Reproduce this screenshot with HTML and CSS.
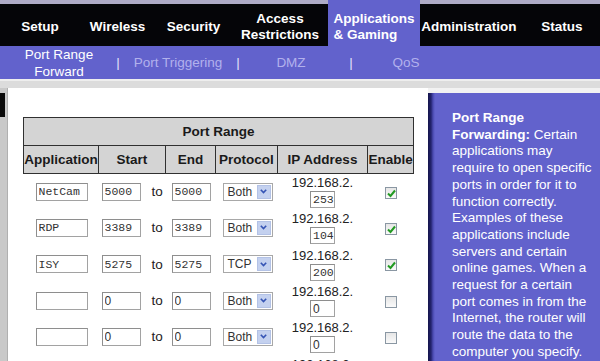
FILE: index.html
```html
<!DOCTYPE html>
<html>
<head>
<meta charset="utf-8">
<title>Port Range Forward</title>
<link rel="stylesheet" href="styles.css">
</head>
<body>
<div class="page">
  <nav class="topnav">
    <div class="tab t-setup">Setup</div>
    <div class="tab t-wireless">Wireless</div>
    <div class="tab t-security">Security</div>
    <div class="tab t-access"><span>Access<br>Restrictions</span></div>
    <div class="tab t-apps active"><span class="left">Applications<br>&amp; Gaming</span></div>
    <div class="tab t-admin">Administration</div>
    <div class="tab t-status">Status</div>
  </nav>
  <nav class="subnav">
    <div class="sub s-prf current">Port Range<br>Forward</div>
    <div class="sep">|</div>
    <div class="sub s-trig">Port Triggering</div>
    <div class="sep">|</div>
    <div class="sub s-dmz">DMZ</div>
    <div class="sep">|</div>
    <div class="sub s-qos">QoS</div>
  </nav>
  <div class="band"></div>
  <div class="main">
    <div class="edge"><div class="edge-mark"></div></div>
    <div class="content">
      <table class="ports">
        <colgroup>
          <col class="w-app"><col class="w-start"><col class="w-end"><col class="w-proto"><col class="w-ip"><col class="w-en">
        </colgroup>
        <thead>
          <tr class="h1"><th colspan="6">Port Range</th></tr>
          <tr class="h2"><th>Application</th><th>Start</th><th>End</th><th>Protocol</th><th>IP Address</th><th>Enable</th></tr>
        </thead>
        <tbody>
          <tr>
            <td class="c-app"><input class="inp mono app" value="NetCam"></td>
            <td class="c-start"><div class="pair"><input class="inp mono port" value="5000"><span class="to">to</span></div></td>
            <td class="c-end"><input class="inp mono port" value="5000"></td>
            <td class="c-proto"><div class="sel"><span class="sel-val">Both</span><span class="sel-btn"><svg width="7" height="5" viewBox="0 0 7 5"><path d="M0.8 0.8 L3.5 3.6 L6.2 0.8" fill="none" stroke="#3554b4" stroke-width="1.6"/></svg></span></div></td>
            <td class="c-ip"><div class="ip-pre">192.168.2.</div><input class="inp mono ip" value="253"></td>
            <td class="c-en"><span class="cb on"><svg width="11" height="11" viewBox="0 0 11 11"><path d="M2 5.5 L4.5 8 L9 2.5" fill="none" stroke="#229a22" stroke-width="2"/></svg></span></td>
          </tr>
          <tr>
            <td class="c-app"><input class="inp mono app" value="RDP"></td>
            <td class="c-start"><div class="pair"><input class="inp mono port" value="3389"><span class="to">to</span></div></td>
            <td class="c-end"><input class="inp mono port" value="3389"></td>
            <td class="c-proto"><div class="sel"><span class="sel-val">Both</span><span class="sel-btn"><svg width="7" height="5" viewBox="0 0 7 5"><path d="M0.8 0.8 L3.5 3.6 L6.2 0.8" fill="none" stroke="#3554b4" stroke-width="1.6"/></svg></span></div></td>
            <td class="c-ip"><div class="ip-pre">192.168.2.</div><input class="inp mono ip" value="104"></td>
            <td class="c-en"><span class="cb on"><svg width="11" height="11" viewBox="0 0 11 11"><path d="M2 5.5 L4.5 8 L9 2.5" fill="none" stroke="#229a22" stroke-width="2"/></svg></span></td>
          </tr>
          <tr>
            <td class="c-app"><input class="inp mono app" value="ISY"></td>
            <td class="c-start"><div class="pair"><input class="inp mono port" value="5275"><span class="to">to</span></div></td>
            <td class="c-end"><input class="inp mono port" value="5275"></td>
            <td class="c-proto"><div class="sel"><span class="sel-val">TCP</span><span class="sel-btn"><svg width="7" height="5" viewBox="0 0 7 5"><path d="M0.8 0.8 L3.5 3.6 L6.2 0.8" fill="none" stroke="#3554b4" stroke-width="1.6"/></svg></span></div></td>
            <td class="c-ip"><div class="ip-pre">192.168.2.</div><input class="inp mono ip" value="200"></td>
            <td class="c-en"><span class="cb on"><svg width="11" height="11" viewBox="0 0 11 11"><path d="M2 5.5 L4.5 8 L9 2.5" fill="none" stroke="#229a22" stroke-width="2"/></svg></span></td>
          </tr>
          <tr>
            <td class="c-app"><input class="inp app" value=""></td>
            <td class="c-start"><div class="pair"><input class="inp port" value="0"><span class="to">to</span></div></td>
            <td class="c-end"><input class="inp port" value="0"></td>
            <td class="c-proto"><div class="sel"><span class="sel-val">Both</span><span class="sel-btn"><svg width="7" height="5" viewBox="0 0 7 5"><path d="M0.8 0.8 L3.5 3.6 L6.2 0.8" fill="none" stroke="#3554b4" stroke-width="1.6"/></svg></span></div></td>
            <td class="c-ip"><div class="ip-pre">192.168.2.</div><input class="inp ip" value="0"></td>
            <td class="c-en"><span class="cb"></span></td>
          </tr>
          <tr>
            <td class="c-app"><input class="inp app" value=""></td>
            <td class="c-start"><div class="pair"><input class="inp port" value="0"><span class="to">to</span></div></td>
            <td class="c-end"><input class="inp port" value="0"></td>
            <td class="c-proto"><div class="sel"><span class="sel-val">Both</span><span class="sel-btn"><svg width="7" height="5" viewBox="0 0 7 5"><path d="M0.8 0.8 L3.5 3.6 L6.2 0.8" fill="none" stroke="#3554b4" stroke-width="1.6"/></svg></span></div></td>
            <td class="c-ip"><div class="ip-pre">192.168.2.</div><input class="inp ip" value="0"></td>
            <td class="c-en"><span class="cb"></span></td>
          </tr>
          <tr>
            <td class="c-app"><input class="inp app" value=""></td>
            <td class="c-start"><div class="pair"><input class="inp port" value="0"><span class="to">to</span></div></td>
            <td class="c-end"><input class="inp port" value="0"></td>
            <td class="c-proto"><div class="sel"><span class="sel-val">Both</span><span class="sel-btn"><svg width="7" height="5" viewBox="0 0 7 5"><path d="M0.8 0.8 L3.5 3.6 L6.2 0.8" fill="none" stroke="#3554b4" stroke-width="1.6"/></svg></span></div></td>
            <td class="c-ip"><div class="ip-pre">192.168.2.</div><input class="inp ip" value="0"></td>
            <td class="c-en"><span class="cb"></span></td>
          </tr>
        </tbody>
      </table>
    </div>
    <aside class="help-col">
      <div class="help">
        <p><b>Port Range Forwarding:</b> Certain applications may require to open specific ports in order for it to function correctly. Examples of these applications include servers and certain online games. When a request for a certain port comes in from the Internet, the router will route the data to the computer you specify.</p>
      </div>
    </aside>
  </div>
</div>
</body>
</html>
```

FILE: styles.css
```css
* { box-sizing: border-box; }

html, body {
  margin: 0;
  padding: 0;
}

body {
  width: 600px;
  height: 361px;
  overflow: hidden;
  background: #ffffff;
  font-family: "Liberation Sans", Arial, sans-serif;
}

.page {
  width: 600px;
  height: 361px;
  display: flex;
  flex-direction: column;
  overflow: hidden;
}

/* ---------- top navigation ---------- */
.topnav {
  display: flex;
  height: 46px;
  background: #050508;
  flex: none;
}

.tab {
  display: flex;
  align-items: center;
  justify-content: center;
  text-align: center;
  border-top: 4px solid #aeabc6;
  padding-top: 4px;
  color: #ffffff;
  font-weight: bold;
  font-size: 13.5px;
  line-height: 16px;
  white-space: nowrap;
}

.tab .left { text-align: left; }

.t-setup { width: 80px; }
.t-wireless { width: 75px; }
.t-security { width: 77px; }
.t-access { width: 96px; }
.t-apps { width: 92px; }
.t-admin { width: 98px; }
.t-status { width: 82px; padding-left: 6px; }

.tab.active {
  background: #6262cc;
  border-top-color: #6262cc;
}

/* ---------- sub navigation ---------- */
.subnav {
  display: flex;
  align-items: center;
  height: 33px;
  background: #6262cc;
  color: #b2b1ec;
  font-size: 13.5px;
  flex: none;
}

.sub {
  text-align: center;
  white-space: nowrap;
}

.sub.current {
  color: #ffffff;
  line-height: 17px;
}

.s-prf { width: 110px; margin-left: 4px; }
.s-trig { width: 112px; }
.s-dmz { width: 105px; padding-right: 7px; }
.s-qos { width: 102px; }

.sep {
  width: 8px;
  text-align: center;
  color: #e4e4fa;
}

.band {
  height: 9px;
  flex: none;
  border-top: 2px solid #eeeeee;
  background: #dcdcdc;
}

/* ---------- main area ---------- */
.main {
  display: flex;
  flex: 1;
  min-height: 0;
}

.edge {
  width: 8px;
  flex: none;
  background: #c9c9c9;
  border-right: 1px solid #b0b0b0;
}

.edge-mark {
  width: 5px;
  height: 24px;
  margin-top: 5px;
  background: #0a0a0a;
}

.content {
  width: 420px;
  flex: none;
  padding: 29px 0 0 15px;
  background: #ffffff;
  overflow: hidden;
}

/* ---------- table ---------- */
.ports {
  width: 390px;
  table-layout: fixed;
  border-collapse: collapse;
  font-size: 13px;
  color: #222222;
}

.w-app { width: 75px; }
.w-start { width: 67px; }
.w-end { width: 50px; }
.w-proto { width: 62px; }
.w-ip { width: 90px; }
.w-en { width: 46px; }

.ports th {
  background: #d4d4d4;
  border: 1px solid #303030;
  font-size: 13.5px;
  font-weight: bold;
  color: #1a1a1a;
  padding: 0;
  height: 28px;
  white-space: nowrap;
  overflow: hidden;
}

.ports td {
  height: 36.3px;
  padding: 0;
  vertical-align: middle;
}

.inp {
  display: block;
  height: 18px;
  border: 1px solid #a2a2a2;
  border-top-color: #8e8e8e;
  border-left-color: #8e8e8e;
  background: #ffffff;
  padding: 0 0 0 2px;
  margin: 0;
  font-family: "Liberation Sans", Arial, sans-serif;
  font-size: 12px;
  color: #333333;
  outline: none;
}

.inp.mono {
  font-family: "Liberation Mono", "Courier New", monospace;
  font-size: 11.5px;
}

.c-app { padding-left: 12px !important; }
.inp.app { width: 52px; }

.c-start { padding-left: 3px !important; }
.pair {
  display: flex;
  align-items: center;
}
.inp.port { width: 39px; }
.to {
  margin-left: 11px;
  font-size: 13.5px;
  color: #222222;
}

.c-end { padding-left: 6px !important; }

.c-proto { padding-left: 7px !important; }
.sel {
  width: 50px;
  height: 18px;
  border: 1px solid #a8a8a8;
  background: #ffffff;
  display: flex;
  align-items: center;
  justify-content: space-between;
  padding: 1px 1px 1px 4px;
}
.sel-val {
  font-size: 12px;
  color: #333333;
}
.sel-btn {
  width: 14px;
  height: 14px;
  background: #c4d1ef;
  border: 1px solid #b3c2e6;
  display: flex;
  align-items: center;
  justify-content: center;
}
.sel-btn svg { display: block; }

.c-ip {
  text-align: center;
}
.ip-pre {
  font-size: 13px;
  line-height: 16px;
  color: #222222;
}
.inp.ip {
  width: 25px;
  height: 17px;
  margin: 0 auto;
}

.c-en { text-align: center; }
.cb {
  display: inline-block;
  width: 12px;
  height: 12px;
  border: 1px solid #8a97a3;
  background: linear-gradient(#e6e6e6, #fafafa);
  vertical-align: middle;
}
.cb svg {
  display: block;
  margin: 0;
}

/* ---------- help panel ---------- */
.help-col {
  width: 172px;
  flex: none;
  padding-top: 5px;
  background: #f2f2f2;
}

.help {
  height: 100%;
  background: linear-gradient(to right, #14144a 0, #23236e 3px, #4a4ab0 5px, #6262cc 7px, #6262cc 100%);
  padding: 17px 5px 0 24px;
  color: #ffffff;
  font-size: 13.5px;
  line-height: 16.7px;
}

.help p {
  margin: 0;
}

.help b {
  font-weight: bold;
}
```
